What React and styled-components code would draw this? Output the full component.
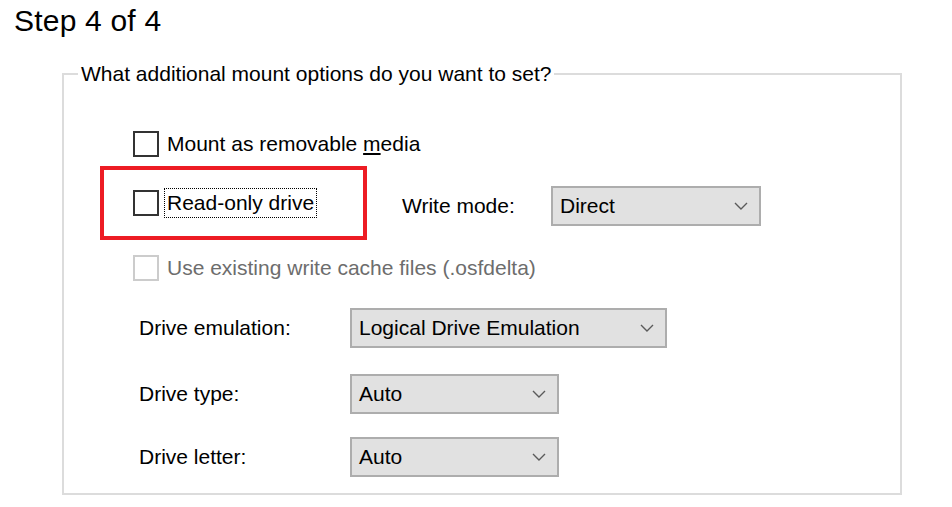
import React from "react";
import styled, { createGlobalStyle } from "styled-components";

const GlobalStyle = createGlobalStyle`
  html, body {
    margin: 0;
    padding: 0;
    background: #ffffff;
  }
  body {
    font-family: "Liberation Sans", Arial, sans-serif;
    color: #000;
  }
`;

const Page = styled.div`
  width: 952px;
  height: 507px;
  overflow: hidden;
  background: #fff;
`;

const Title = styled.h1`
  margin: 4px 0 0 14px;
  font-size: 30px;
  line-height: 34px;
  font-weight: 400;
  letter-spacing: 0.2px;
`;

const Group = styled.fieldset`
  box-sizing: border-box;
  margin: 24px 0 0 62px;
  padding: 0;
  width: 840px;
  height: 433px;
  min-width: 0;
  border: 2px solid #dcdcdc;
`;

const Legend = styled.legend`
  margin-left: 14px;
  padding: 0 3px;
  font-size: 21px;
  line-height: 24px;
`;

const Body = styled.div`
  display: flex;
  flex-direction: column;
  padding: 44px 0 0 36px;
`;

const CheckRow = styled.div`
  display: flex;
  align-items: center;
  height: 28px;
  padding-left: 33px;
  margin-top: ${(p) => p.$gap || 0}px;
`;

const InlineRow = styled.div`
  display: flex;
  align-items: center;
  margin-top: ${(p) => p.$gap || 0}px;
`;

const Highlight = styled.div`
  box-sizing: border-box;
  display: flex;
  align-items: center;
  width: 267px;
  height: 74px;
  padding-left: 29px;
  border: 4px solid #ed1c24;
`;

const Box = styled.span`
  box-sizing: border-box;
  flex: none;
  width: 26px;
  height: 26px;
  border: 2px solid ${(p) => (p.$disabled ? "#cccccc" : "#333333")};
  background: #fff;
`;

const CheckText = styled.span`
  margin-left: 5px;
  padding: 0 2px;
  font-size: 21px;
  line-height: 28px;
  white-space: nowrap;
  color: ${(p) => (p.$disabled ? "#6d6d6d" : "#000")};
  border: 1px ${(p) => (p.$focused ? "dotted #000" : "solid transparent")};
`;

const FieldRow = styled.div`
  display: flex;
  align-items: center;
  padding-left: 39px;
  margin-top: ${(p) => p.$gap || 0}px;
`;

const Label = styled.span`
  flex: none;
  width: ${(p) => p.$width}px;
  margin-left: ${(p) => p.$offset || 0}px;
  margin-top: ${(p) => p.$drop || 0}px;
  font-size: 21px;
  white-space: nowrap;
`;

const Select = styled.div`
  box-sizing: border-box;
  display: flex;
  align-items: center;
  justify-content: space-between;
  width: ${(p) => p.$width}px;
  height: 40px;
  margin-top: ${(p) => p.$drop || 0}px;
  padding: 0 11px 0 7px;
  background: #e1e1e1;
  border: 2px solid #adadad;
  font-size: 21px;
`;

const Chevron = () => (
  <svg width="14" height="8" viewBox="0 0 14 8">
    <polyline points="1,1 7,7 13,1" fill="none" stroke="#5a5a5a" strokeWidth="1.4" />
  </svg>
);

const Dropdown = ({ value, width, drop }) => (
  <Select $width={width} $drop={drop}>
    <span>{value}</span>
    <Chevron />
  </Select>
);

const App = () => (
  <Page>
    <GlobalStyle />
    <Title>Step 4 of 4</Title>
    <Group>
      <Legend>What additional mount options do you want to set?</Legend>
      <Body>
        <CheckRow>
          <Box />
          <CheckText>
            Mount as removable <u>m</u>edia
          </CheckText>
        </CheckRow>
        <InlineRow $gap={8}>
          <Highlight>
            <Box />
            <CheckText $focused>Read-only drive</CheckText>
          </Highlight>
          <Label $width={149} $offset={35} $drop={6}>Write mode:</Label>
          <Dropdown value="Direct" width={210} drop={6} />
        </InlineRow>
        <CheckRow $gap={14}>
          <Box $disabled />
          <CheckText $disabled>Use existing write cache files (.osfdelta)</CheckText>
        </CheckRow>
        <FieldRow $gap={26}>
          <Label $width={211}>Drive emulation:</Label>
          <Dropdown value="Logical Drive Emulation" width={317} />
        </FieldRow>
        <FieldRow $gap={26}>
          <Label $width={211}>Drive type:</Label>
          <Dropdown value="Auto" width={209} />
        </FieldRow>
        <FieldRow $gap={23}>
          <Label $width={211}>Drive letter:</Label>
          <Dropdown value="Auto" width={209} />
        </FieldRow>
      </Body>
    </Group>
  </Page>
);

export default App;
